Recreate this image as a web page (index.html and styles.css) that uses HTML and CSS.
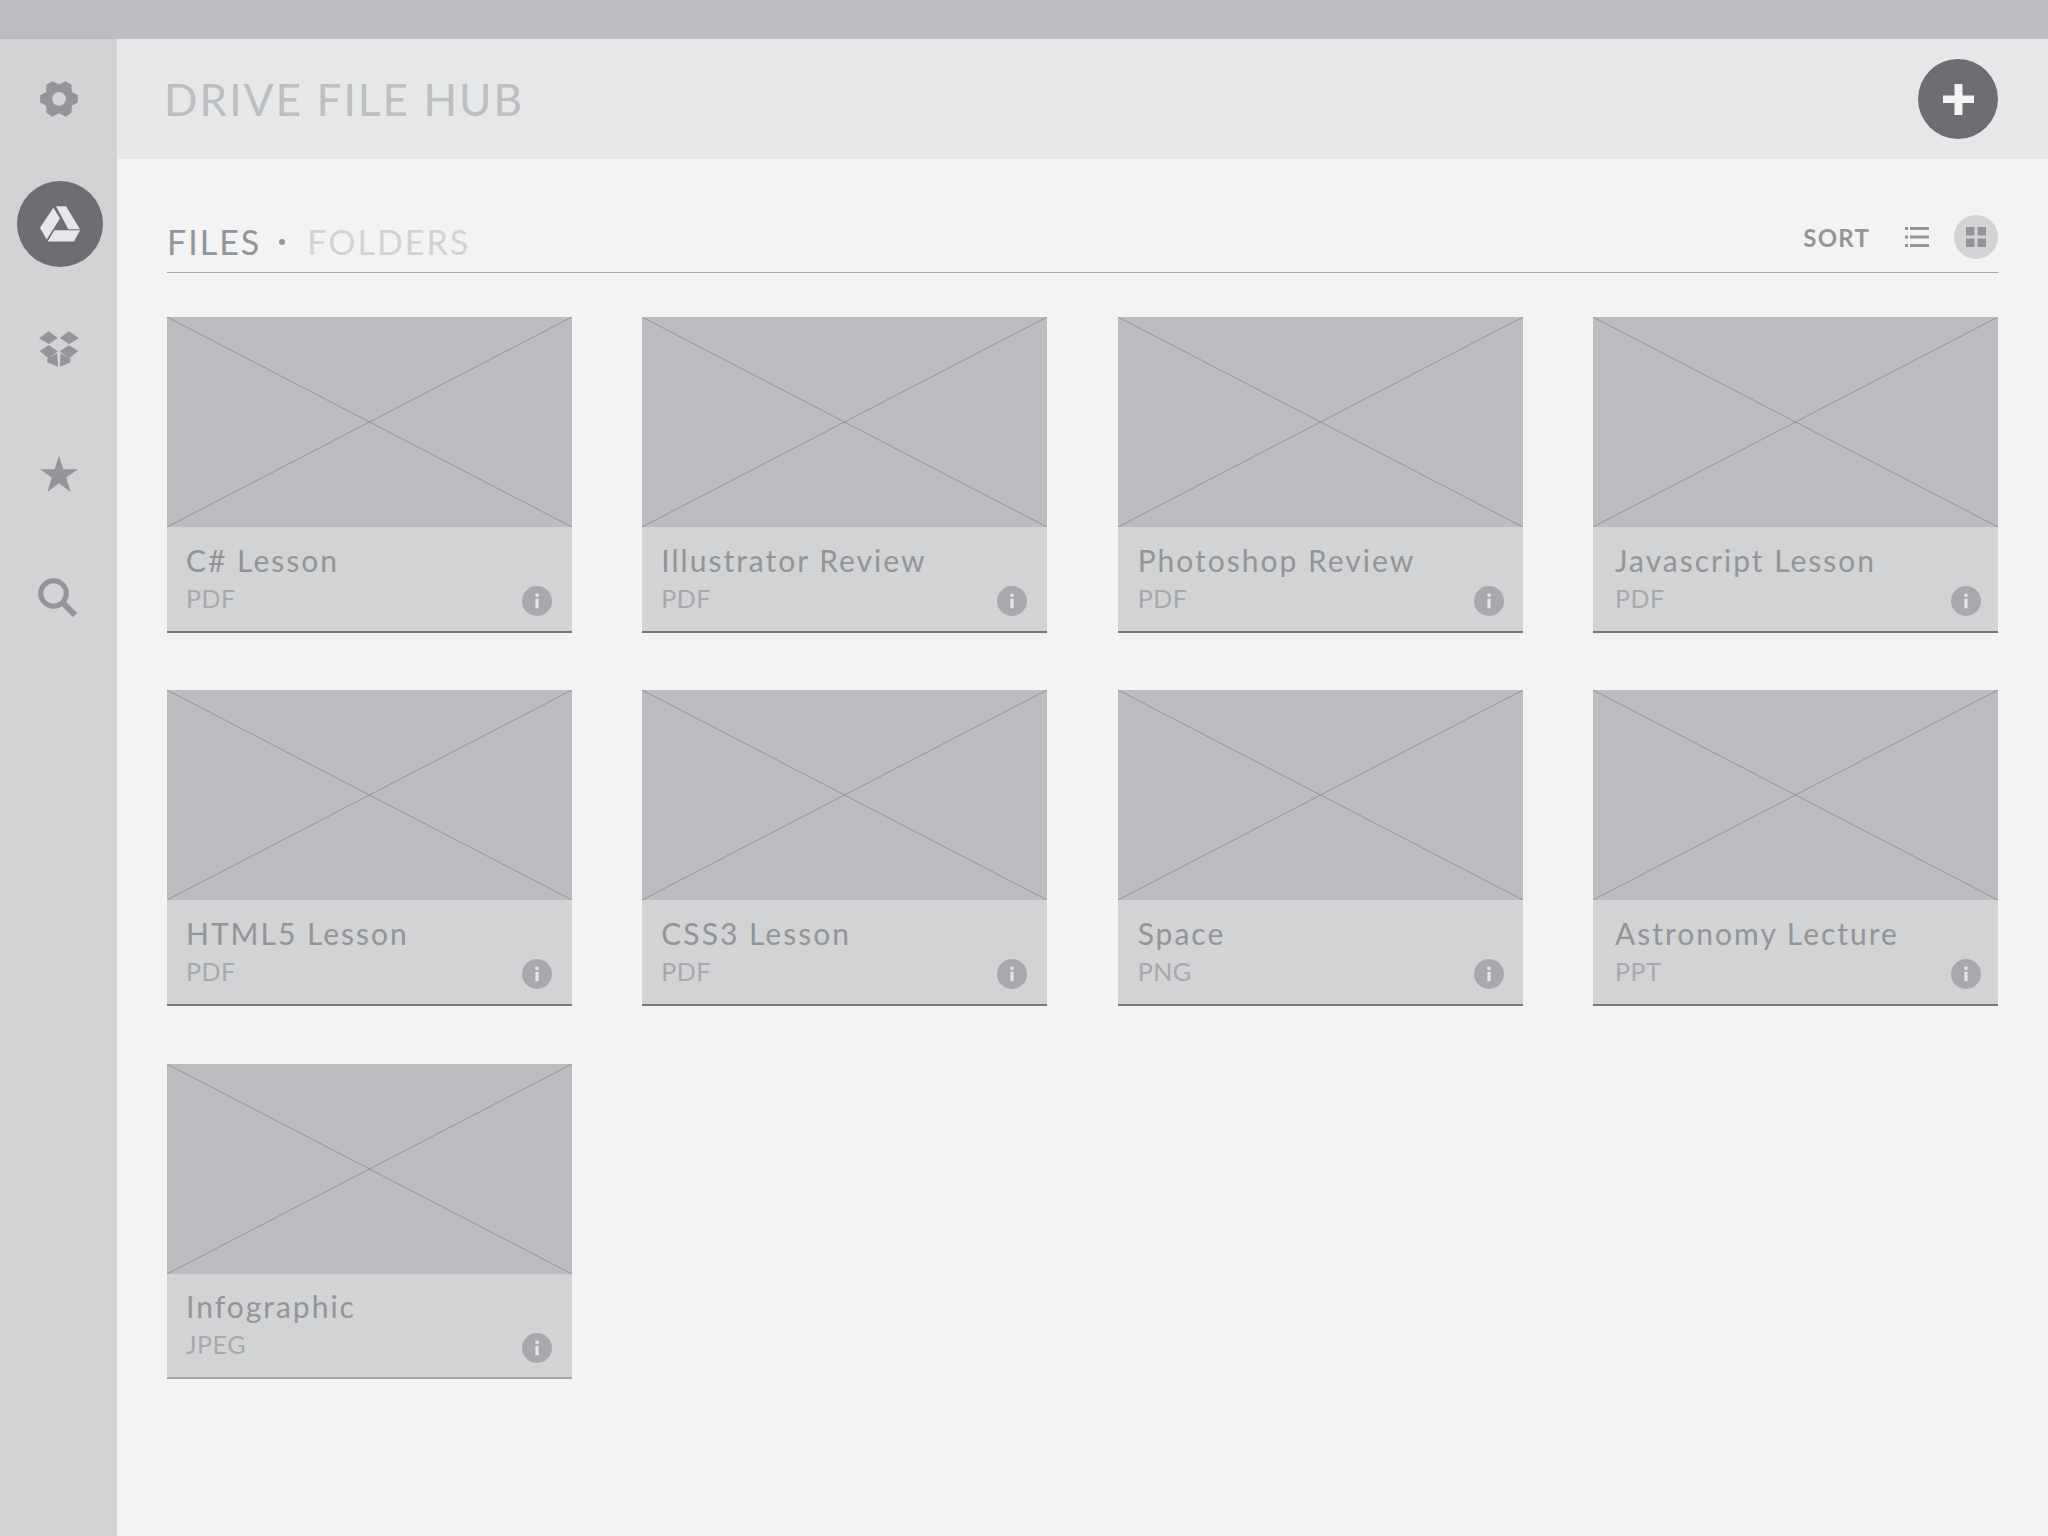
FILE: index.html
```html
<!DOCTYPE html>
<html lang="en">
<head>
<meta charset="utf-8">
<title>Drive File Hub</title>
<link rel="stylesheet" href="styles.css">
</head>
<body>
<svg class="defs" width="0" height="0" aria-hidden="true">
  <symbol id="ph" viewBox="0 0 405 210" preserveAspectRatio="none">
    <path d="M0 0L405 210M405 0L0 210" fill="none" stroke="#939598" stroke-width="1"/>
  </symbol>
  <symbol id="info" viewBox="0 0 30 30">
    <circle cx="15" cy="15" r="15" fill="#a7a9ac"/>
    <rect x="13.4" y="7.6" width="3.2" height="3.2" fill="#e6e7e8"/>
    <rect x="13.4" y="12.8" width="3.2" height="9.4" fill="#e6e7e8"/>
  </symbol>
</svg>
<div class="topbar"></div>
<div class="shell">
  <aside class="rail">
    <div class="rail-item">
      <svg class="ico" width="38" height="36" viewBox="58 62 114 109"><path fill="#939598" fill-rule="evenodd" d="M95 63L115 72L135 63L153 73L154 95L172 105V127L154 137L153 158L135 170L115 160L95 170L77 158L76 137L58 127V105L76 95L77 73ZM115 95A21 21 0 1 0 115 137A21 21 0 1 0 115 95Z"/></svg>
    </div>
    <div class="rail-item rail-active">
      <svg class="ico" width="40" height="36" viewBox="85 113 120 107"><g fill="#e6e7e8"><path d="M125 118L145 150L105 213L85 178Z"/><path d="M133 113H163L205 182H170Z"/><path d="M128 185H205L187 219H108Z"/></g></svg>
    </div>
    <div class="rail-item">
      <svg class="ico" width="40" height="36" viewBox="116 97 119 106"><g fill="#939598"><path d="M116 118L145 97L172 117L145 135Z"/><path d="M178 117L205 97L235 118L205 135Z"/><path d="M118 156L145 138L172 157L145 178Z"/><path d="M178 157L205 139L233 156L205 178Z"/><path d="M140 180L170 163L173 203L141 190Z"/><path d="M180 163L210 180L209 190L178 203Z"/></g></svg>
    </div>
    <div class="rail-item">
      <svg class="ico" width="38" height="36" viewBox="0 0 38 36"><path fill="#939598" d="M19 0L23.5 13.2H38L26.2 21.6L30.6 36L19 27.2L7.4 36L11.8 21.6L0 13.2H14.5Z"/></svg>
    </div>
    <div class="rail-item">
      <svg class="ico ico-search" width="40" height="39" viewBox="0 0 40 39"><g fill="none" stroke="#939598"><circle cx="15.5" cy="15.5" r="12.8" stroke-width="5"/><path d="M25 25L37 37" stroke-width="6"/></g></svg>
    </div>
  </aside>
  <div class="content">
    <header class="head">
      <h1 class="title">DRIVE FILE HUB</h1>
      <button class="add" type="button" aria-label="Add">
        <svg width="31" height="31" viewBox="0 0 31 31"><path fill="#f4f4f4" d="M11.5 0H19.5V11.5H31V19H19.5V31H11.5V19H0V11.5H11.5Z"/></svg>
      </button>
    </header>
    <main class="main">
      <div class="tabs">
        <div class="tab-group">
          <span class="tab tab-on">FILES</span>
          <span class="tab-dot"></span>
          <span class="tab tab-off">FOLDERS</span>
        </div>
        <div class="tools">
          <span class="sort">SORT</span>
          <svg class="list-ico" width="24" height="20" viewBox="0 0 24 20"><path fill="#939598" d="M0 0H3V3H0ZM5 0H24V3H5ZM0 8.5H3V11.5H0ZM5 8.5H24V11.5H5ZM0 17H3V20H0ZM5 17H24V20H5Z"/></svg>
          <span class="grid-btn">
            <svg width="20" height="20" viewBox="0 0 20 20"><path fill="#939598" d="M0 0H8.5V8.5H0ZM11.5 0H20V8.5H11.5ZM0 11.5H8.5V20H0ZM11.5 11.5H20V20H11.5Z"/></svg>
          </span>
        </div>
      </div>
      <div class="cards">
        <article class="card"><svg class="thumb"><use href="#ph"/></svg><div class="cap"><div class="name">C# Lesson</div><div class="type">PDF</div><svg class="info"><use href="#info"/></svg></div></article>
        <article class="card"><svg class="thumb"><use href="#ph"/></svg><div class="cap"><div class="name">Illustrator Review</div><div class="type">PDF</div><svg class="info"><use href="#info"/></svg></div></article>
        <article class="card"><svg class="thumb"><use href="#ph"/></svg><div class="cap"><div class="name">Photoshop Review</div><div class="type">PDF</div><svg class="info"><use href="#info"/></svg></div></article>
        <article class="card"><svg class="thumb"><use href="#ph"/></svg><div class="cap"><div class="name">Javascript Lesson</div><div class="type">PDF</div><svg class="info"><use href="#info"/></svg></div></article>
        <article class="card"><svg class="thumb"><use href="#ph"/></svg><div class="cap"><div class="name">HTML5 Lesson</div><div class="type">PDF</div><svg class="info"><use href="#info"/></svg></div></article>
        <article class="card"><svg class="thumb"><use href="#ph"/></svg><div class="cap"><div class="name">CSS3 Lesson</div><div class="type">PDF</div><svg class="info"><use href="#info"/></svg></div></article>
        <article class="card"><svg class="thumb"><use href="#ph"/></svg><div class="cap"><div class="name">Space</div><div class="type">PNG</div><svg class="info"><use href="#info"/></svg></div></article>
        <article class="card"><svg class="thumb"><use href="#ph"/></svg><div class="cap"><div class="name">Astronomy Lecture</div><div class="type">PPT</div><svg class="info"><use href="#info"/></svg></div></article>
        <article class="card"><svg class="thumb"><use href="#ph"/></svg><div class="cap"><div class="name">Infographic</div><div class="type">JPEG</div><svg class="info"><use href="#info"/></svg></div></article>
      </div>
    </main>
  </div>
</div>
</body>
</html>
```
FILE: styles.css
```css
* { box-sizing: border-box; }
html, body { margin: 0; padding: 0; }
body {
  width: 2048px;
  height: 1536px;
  overflow: hidden;
  display: flex;
  flex-direction: column;
  background: #f3f3f3;
  font-family: Lato, "Liberation Sans", sans-serif;
}
.defs { display: block; height: 0; }
.topbar { height: 39px; flex: none; background: #bcbdc0; }
.shell { flex: 1; display: flex; min-height: 0; }

.rail {
  width: 117px;
  flex: none;
  background: #d1d3d4;
  padding-top: 17px;
  display: flex;
  flex-direction: column;
  gap: 39px;
  align-items: center;
}
.rail-item {
  width: 86px;
  height: 86px;
  display: flex;
  align-items: center;
  justify-content: center;
}
.rail-active { background: #6d6e71; border-radius: 50%; margin-left: 3px; }
.ico-search { margin: -4px 2px 0 0; }

.content { flex: 1; min-width: 0; display: flex; flex-direction: column; }
.head {
  height: 120px;
  flex: none;
  background: #e6e7e8;
  display: flex;
  align-items: center;
  justify-content: space-between;
  padding: 0 50px 0 47px;
}
.title {
  margin: 0;
  font-size: 44px;
  font-weight: 400;
  letter-spacing: 2.1px;
  color: #bcbec0;
}
.add {
  width: 80px;
  height: 80px;
  padding: 0;
  border: 0;
  border-radius: 50%;
  background: #6d6e71;
  display: flex;
  align-items: center;
  justify-content: center;
}

.main { flex: 1; padding: 56px 50px 0 50px; }
.tabs {
  height: 58px;
  border-bottom: 1px solid #a7a9ac;
  display: flex;
  justify-content: space-between;
  align-items: flex-start;
}
.tab-group { display: flex; align-items: center; height: 56px; padding-bottom: 3px; }
.tab { font-size: 34px; letter-spacing: 2px; }
.tab-on { color: #939598; }
.tab-off { color: #d1d3d4; }
.tab-dot {
  width: 6px;
  height: 6px;
  margin: 0 22px 0 18px;
  border-radius: 50%;
  background: #939598;
}
.tools { display: flex; align-items: center; height: 44px; }
.sort { font-size: 24px; font-weight: 700; letter-spacing: 1.2px; color: #939598; }
.list-ico { margin: 0 25px 0 35px; }
.grid-btn {
  width: 44px;
  height: 44px;
  border-radius: 50%;
  background: #d1d3d4;
  display: flex;
  align-items: center;
  justify-content: center;
}

.cards {
  margin-top: 44px;
  display: grid;
  grid-template-columns: repeat(4, 405px);
  justify-content: space-between;
  row-gap: 57.9px;
}
.card { --shift: 0px; display: flex; flex-direction: column; }
.card:nth-child(4n+2) { --shift: 0px; }
.card:nth-child(4n+3) { --shift: 1px; }
.card:nth-child(4n) { --shift: 3px; }
.thumb { display: block; width: 405px; height: 210px; background: #bcbdc0; }
.cap {
  position: relative;
  height: 105.5px;
  padding: 15.5px 0 0 calc(19px + var(--shift));
  background: #d1d3d4;
  border-bottom: 2px solid #77787b;
}
.card:nth-child(9) .cap { border-bottom-color: #a1a3a5; }
.name { margin-bottom: 4px; font-size: 30px; line-height: 35px; letter-spacing: 2px; color: #939598; }
.type { font-size: 25px; line-height: 32px; letter-spacing: .5px; color: #a7a9ac; }
.info { position: absolute; right: calc(20px - var(--shift)); bottom: 14.5px; width: 30px; height: 30px; }
```
